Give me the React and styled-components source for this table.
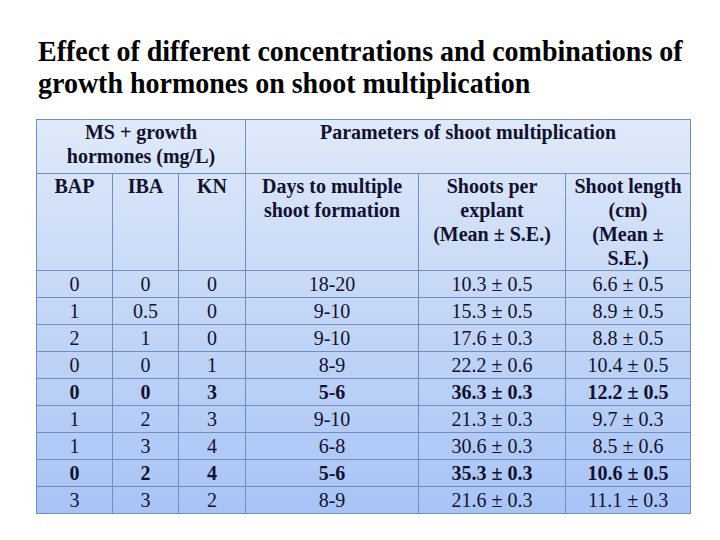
import React from 'react';
import styled, { createGlobalStyle } from 'styled-components';

const GlobalStyle = createGlobalStyle`
  html, body {
    margin: 0;
    padding: 0;
    background: #ffffff;
  }
  body {
    font-family: "Liberation Serif", "Times New Roman", serif;
    color: #121230;
  }
`;

const Slide = styled.div`
  width: 720px;
  height: 540px;
  box-sizing: border-box;
  padding: 35px 0 0 36px;
  overflow: hidden;
`;

const Title = styled.h1`
  margin: 0 0 20px 2px;
  font-size: 29px;
  line-height: 32px;
  font-weight: 700;
  color: #000;
  white-space: nowrap;
  transform: scaleX(0.965);
  transform-origin: left top;
`;

const Table = styled.table`
  width: 654px;
  table-layout: fixed;
  border-collapse: collapse;
  border: 1px solid #6d8fc2;
  background: linear-gradient(180deg, #dfe9f9 0%, #c9daf7 40%, #a8c3f5 100%);
  font-size: 20px;
  line-height: 24px;
`;

const HeadCell = styled.th`
  border: 1px solid #6d8fc2;
  padding: 0 1px;
  font-weight: 700;
  text-align: center;
  vertical-align: top;
  height: ${p => p.$h}px;
  box-sizing: border-box;
`;

const Cell = styled.td`
  border: 1px solid #6d8fc2;
  padding: 0 1px;
  height: 27px;
  box-sizing: border-box;
  text-align: center;
  vertical-align: middle;
  font-weight: ${p => (p.$bold ? 700 : 400)};
`;

const widths = [76, 66, 67, 173, 147, 125];

const rows = [
  ['0', '0', '0', '18-20', '10.3 ± 0.5', '6.6 ± 0.5'],
  ['1', '0.5', '0', '9-10', '15.3 ± 0.5', '8.9 ± 0.5'],
  ['2', '1', '0', '9-10', '17.6 ± 0.3', '8.8 ± 0.5'],
  ['0', '0', '1', '8-9', '22.2 ± 0.6', '10.4 ± 0.5'],
  ['0', '0', '3', '5-6', '36.3 ± 0.3', '12.2 ± 0.5', true],
  ['1', '2', '3', '9-10', '21.3 ± 0.3', '9.7 ± 0.3'],
  ['1', '3', '4', '6-8', '30.6 ± 0.3', '8.5 ± 0.6'],
  ['0', '2', '4', '5-6', '35.3 ± 0.3', '10.6 ± 0.5', true],
  ['3', '3', '2', '8-9', '21.6 ± 0.3', '11.1 ± 0.3'],
];

const App = () => (
  <>
    <GlobalStyle />
    <Slide>
      <Title>
        Effect of different concentrations and combinations of
        <br />
        growth hormones on shoot multiplication
      </Title>
      <Table>
        <colgroup>
          {widths.map((w, i) => (
            <col key={i} style={{ width: w }} />
          ))}
        </colgroup>
        <thead>
          <tr>
            <HeadCell colSpan={3} $h={54}>MS + growth<br />hormones (mg/L)</HeadCell>
            <HeadCell colSpan={3} $h={54}>Parameters of shoot multiplication</HeadCell>
          </tr>
          <tr>
            <HeadCell $h={96}>BAP</HeadCell>
            <HeadCell $h={96}>IBA</HeadCell>
            <HeadCell $h={96}>KN</HeadCell>
            <HeadCell $h={96}>Days to multiple<br />shoot formation</HeadCell>
            <HeadCell $h={96}>Shoots per<br />explant<br />(Mean ± S.E.)</HeadCell>
            <HeadCell $h={96}>Shoot length<br />(cm)<br />(Mean ±<br />S.E.)</HeadCell>
          </tr>
        </thead>
        <tbody>
          {rows.map((r, i) => (
            <tr key={i}>
              {r.slice(0, 6).map((v, j) => (
                <Cell key={j} $bold={r[6]}>{v}</Cell>
              ))}
            </tr>
          ))}
        </tbody>
      </Table>
    </Slide>
  </>
);

export default App;
